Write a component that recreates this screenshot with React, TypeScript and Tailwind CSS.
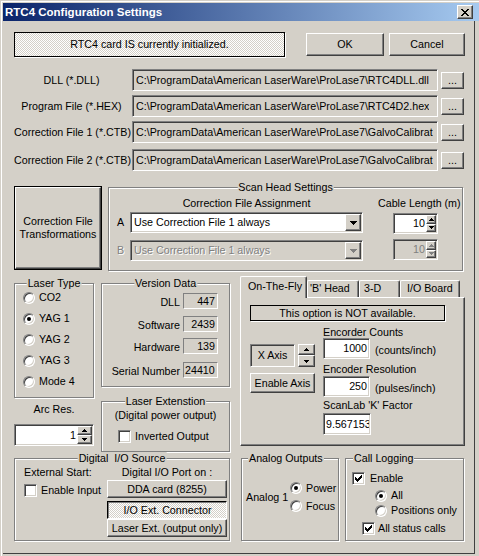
import type { ReactNode } from 'react';

const sunken =
  'border border-t-[#808080] border-l-[#808080] border-b-white border-r-white shadow-[inset_1px_1px_0_#404040,inset_-1px_-1px_0_#d4d0c8]';
const raised =
  'border border-t-white border-l-white border-b-[#404040] border-r-[#404040] shadow-[inset_-1px_-1px_0_#808080]';
const thinSunken = 'border border-t-[#808080] border-l-[#808080] border-b-white border-r-white';
const dither = 'bg-[repeating-conic-gradient(#ffffff_0_25%,#d4d0c8_0_50%)] bg-[length:2px_2px]';

function Btn({ className = '', children }: { className?: string; children?: ReactNode }) {
  return (
    <div className={`${raised} bg-[#d4d0c8] flex items-center justify-center leading-[13px] whitespace-nowrap ${className}`}>
      {children}
    </div>
  );
}

function Group({
  title,
  titleClass = 'left-1/2 -translate-x-1/2',
  className = '',
  children,
}: {
  title: string;
  titleClass?: string;
  className?: string;
  children?: ReactNode;
}) {
  return (
    <div className={`relative border border-[#808080] shadow-[inset_1px_1px_0_#fff,1px_1px_0_#fff] ${className}`}>
      <span className={`absolute -top-[7px] bg-[#d4d0c8] px-[1px] leading-[13px] whitespace-pre ${titleClass}`}>{title}</span>
      {children}
    </div>
  );
}

function Radio({ checked = false }: { checked?: boolean }) {
  return (
    <span className="relative shrink-0 w-[12px] h-[12px] rounded-full bg-white border border-t-[#808080] border-l-[#808080] border-b-white border-r-white shadow-[inset_1px_1px_0_#404040,inset_-1px_-1px_0_#d4d0c8]">
      {checked && <span className="absolute left-[3px] top-[3px] w-[4px] h-[4px] rounded-full bg-black" />}
    </span>
  );
}

function Check({ checked = false }: { checked?: boolean }) {
  return (
    <span className={`shrink-0 w-[13px] h-[13px] bg-white ${sunken} flex items-center justify-center`}>
      {checked && (
        <svg width="7" height="7" viewBox="0 0 7 7" shapeRendering="crispEdges">
          <path
            d="M6 0h1v1h-1z M5 1h2v1h-2z M0 2h1v1h-1z M4 2h3v1h-3z M0 3h2v1h-2z M3 3h3v1h-3z M0 4h5v1h-5z M1 5h3v1h-3z M2 6h1v1h-1z"
            fill="#000"
          />
        </svg>
      )}
    </span>
  );
}

function Tri({ down = false, color = '#000' }: { down?: boolean; color?: string }) {
  return (
    <svg width="5" height="3" viewBox="0 0 5 3" shapeRendering="crispEdges">
      <path d={down ? 'M0 0h5v1H0z M1 1h3v1H1z M2 2h1v1H2z' : 'M2 0h1v1H2z M1 1h3v1H1z M0 2h5v1H0z'} fill={color} />
    </svg>
  );
}

function Spin({
  value,
  className,
  btnW = 'w-[15px]',
  disabled = false,
}: {
  value: string;
  className: string;
  btnW?: string;
  disabled?: boolean;
}) {
  const c = disabled ? '#808080' : '#000';
  return (
    <div className={`${sunken} p-[1px] flex ${disabled ? 'bg-[#d4d0c8] text-[#808080]' : 'bg-white'} ${className}`}>
      <div className="flex-1 flex items-center justify-end pr-[1px]">{value}</div>
      <div className={`flex flex-col ${btnW}`}>
        <div className={`flex-1 ${raised} bg-[#d4d0c8] flex items-center justify-center`}>
          <Tri color={c} />
        </div>
        <div className={`flex-1 ${raised} bg-[#d4d0c8] flex items-center justify-center`}>
          <Tri down color={c} />
        </div>
      </div>
    </div>
  );
}

function Combo({ text, disabled = false }: { text: string; disabled?: boolean }) {
  return (
    <div className={`${sunken} p-[1px] w-[233px] h-[21px] flex ${disabled ? 'bg-[#d4d0c8]' : 'bg-white'}`}>
      <div
        className={`flex-1 flex items-center pl-[2px] whitespace-nowrap ${
          disabled ? 'text-[#808080] [text-shadow:1px_1px_0_#fff]' : ''
        }`}
      >
        {text}
      </div>
      <div className={`w-[16px] ${raised} bg-[#d4d0c8] flex items-center justify-center`}>
        <svg width="7" height="4" viewBox="0 0 7 4" shapeRendering="crispEdges">
          <path d="M0 0h7v1H0z M1 1h5v1H1z M2 2h3v1H2z M3 3h1v1H3z" fill={disabled ? '#808080' : '#000'} />
        </svg>
      </div>
    </div>
  );
}

const files = [
  { label: 'DLL (*.DLL)', path: 'C:\\ProgramData\\American LaserWare\\ProLase7\\RTC4DLL.dll', mt: 'mt-[12px]' },
  { label: 'Program File (*.HEX)', path: 'C:\\ProgramData\\American LaserWare\\ProLase7\\RTC4D2.hex', mt: 'mt-[4px]' },
  { label: 'Correction File 1 (*.CTB)', path: 'C:\\ProgramData\\American LaserWare\\ProLase7\\GalvoCalibrat', mt: 'mt-[4px]' },
  { label: 'Correction File 2 (*.CTB)', path: 'C:\\ProgramData\\American LaserWare\\ProLase7\\GalvoCalibrat', mt: 'mt-[6px]' },
];

const versions = [
  { label: 'DLL', value: '447', mt: 'mt-0' },
  { label: 'Software', value: '2439', mt: 'mt-[7px]' },
  { label: 'Hardware', value: '139', mt: 'mt-[6px]' },
  { label: 'Serial Number', value: '24410', mt: 'mt-[8px]' },
];

export default function App() {
  return (
    <div className="w-[479px] h-[556px] bg-[#d4d0c8] font-['Liberation_Sans',Arial,sans-serif] text-[10.7px] text-black leading-[13px] overflow-hidden pt-[1px] pl-[1px] select-none">
      <div className="h-full border-t border-l border-white pt-[1px] pl-[1px]">
        {/* Title bar */}
        <div className="h-[18px] flex items-center bg-[linear-gradient(to_right,#0a246a,#a6caf0)] pl-[2px]">
          <span className="text-white font-bold text-[11.5px]">RTC4 Configuration Settings</span>
          <div className={`ml-auto mr-[6px] w-[16px] h-[14px] ${raised} bg-[#d4d0c8] flex items-center justify-center`}>
            <svg width="8" height="7" viewBox="0 0 8 7" shapeRendering="crispEdges">
              <path
                d="M0 0h2v1H0z M6 0h2v1H6z M1 1h2v1H1z M5 1h2v1H5z M2 2h4v1H2z M3 3h2v1H3z M2 4h4v1H2z M1 5h2v1H1z M5 5h2v1H5z M0 6h2v1H0z M6 6h2v1H6z"
                fill="#000"
              />
            </svg>
          </div>
        </div>

        {/* Body */}
        <div className="w-[472px] h-[533px] border-r border-b border-[#404040] pl-[11px] pt-[11px] flex flex-col">
          {/* Status + OK / Cancel */}
          <div className="flex items-start">
            <div className={`w-[271px] h-[25px] border border-black shadow-[1px_1px_0_#fff] ${dither} flex items-center justify-center`}>
              RTC4 card IS currently initialized.
            </div>
            <Btn className="ml-[21px] mt-[1px] w-[78px] h-[23px]">OK</Btn>
            <Btn className="ml-[5px] mt-[1px] w-[76px] h-[23px]">Cancel</Btn>
          </div>

          {/* File rows */}
          {files.map((f) => (
            <div key={f.label} className={`flex items-center h-[22px] ${f.mt}`}>
              <div className="w-[115px] text-center whitespace-nowrap">{f.label}</div>
              <div className={`ml-[3px] w-[306px] h-[22px] ${sunken} bg-[#d4d0c8] pl-[3px] pr-[3px] flex items-center`}>
                <div className="overflow-hidden whitespace-nowrap">{f.path}</div>
              </div>
              <Btn className="ml-[3px] w-[23px] h-[17px]">...</Btn>
            </div>
          ))}

          {/* Correction transformations + scan head */}
          <div className="flex items-start mt-[15px]">
            <div className="w-[88px] h-[84px] border border-black">
              <div className={`w-full h-full ${raised} bg-[#d4d0c8] flex flex-col items-center justify-center text-center`}>
                <span>Correction File</span>
                <span>Transformations</span>
              </div>
            </div>
            <Group title="Scan Head Settings" className="ml-[6px] mt-[1px] w-[355px] h-[84px] pt-[9px] pl-[8px] flex">
              <div className="flex flex-col">
                <div className="ml-[13px] w-[233px] text-center">Correction File Assignment</div>
                <div className="mt-[2px] flex items-center">
                  <span className="w-[13px]">A</span>
                  <Combo text="Use Correction File 1 always" />
                </div>
                <div className="mt-[7px] flex items-center">
                  <span className="w-[13px] text-[#808080] [text-shadow:1px_1px_0_#fff]">B</span>
                  <Combo text="Use Correction File 1 always" disabled />
                </div>
              </div>
              <div className="ml-[15px] flex flex-col">
                <div className="whitespace-nowrap">Cable Length (m)</div>
                <Spin value="10" className="mt-[3px] ml-[15px] w-[45px] h-[21px]" btnW="w-[10px]" />
                <Spin value="10" className="mt-[5px] ml-[15px] w-[45px] h-[21px]" btnW="w-[10px]" disabled />
              </div>
            </Group>
          </div>

          {/* Lower area */}
          <div className="flex items-start mt-[5px]">
            {/* Left column */}
            <div className="w-[216px] flex flex-col">
              <div className="flex items-start">
                <div className="w-[80px] mt-[7px] flex flex-col">
                  <Group title="Laser Type" className="h-[115px] pt-[3px] pl-[8px]">
                    {['CO2', 'YAG 1', 'YAG 2', 'YAG 3', 'Mode 4'].map((t) => (
                      <div key={t} className="h-[21px] flex items-center">
                        <Radio checked={t === 'YAG 1'} />
                        <span className="ml-[4px]">{t}</span>
                      </div>
                    ))}
                  </Group>
                  <div className="mt-[5px] text-center">Arc Res.</div>
                  <Spin value="1" className="mt-[8px] w-[80px] h-[22px]" />
                </div>
                <div className="ml-[7px] w-[129px] mt-[7px] flex flex-col">
                  <Group title="Version Data" className="h-[104px] pt-[9px]">
                    {versions.map((v) => (
                      <div key={v.label} className={`flex items-start ${v.mt}`}>
                        <span className="w-[78px] text-right mt-[3px] whitespace-nowrap">{v.label}</span>
                        <div
                          className={`ml-[3px] w-[35px] h-[16px] ${thinSunken} overflow-hidden whitespace-nowrap flex items-center ${
                            v.label === 'Serial Number' ? 'pl-[1px]' : 'justify-end pr-[2px]'
                          }`}
                        >
                          {v.value}
                        </div>
                      </div>
                    ))}
                  </Group>
                  <Group title="Laser Extenstion" className="mt-[14px] h-[51px] pt-[7px]">
                    <div className="text-center">(Digital power output)</div>
                    <div className="mt-[8px] pl-[16px] flex items-center">
                      <Check />
                      <span className="ml-[4px]">Inverted Output</span>
                    </div>
                  </Group>
                </div>
              </div>
              <Group title="Digital  I/O Source" className="mt-[6px] h-[83px] pt-[7px] flex">
                <div className="w-[92px] pl-[9px] flex flex-col">
                  <span className="whitespace-nowrap">External Start:</span>
                  <div className="mt-[5px] flex items-center">
                    <Check />
                    <span className="ml-[4px] whitespace-nowrap">Enable Input</span>
                  </div>
                </div>
                <div className="w-[120px] flex flex-col">
                  <span className="text-center whitespace-nowrap">Digital I/O Port on :</span>
                  <Btn className="mt-[1px] h-[18px]">DDA card (8255)</Btn>
                  <div
                    className={`mt-[3px] h-[18px] border border-t-black border-l-black border-b-white border-r-white shadow-[inset_1px_1px_0_#808080] ${dither} flex items-center justify-center pt-[1px] pl-[1px]`}
                  >
                    I/O Ext. Connector
                  </div>
                  <Btn className="h-[18px]">Laser Ext. (output only)</Btn>
                </div>
              </Group>
            </div>

            {/* Right column */}
            <div className="ml-[10px] w-[225px] flex flex-col">
              <div className="flex items-end h-[21px]">
                <div className="relative z-10 w-[67px] h-[22px] -mb-[1px] border-t border-l border-white border-r border-r-[#404040] rounded-t-[2px] bg-[#d4d0c8] shadow-[inset_-1px_0_0_#808080] pl-[7px] pt-[3px]">
                  On-The-Fly
                </div>
                <div className="w-[52px] h-[17px] border-t border-l border-white border-r border-r-[#404040] rounded-t-[2px] shadow-[inset_-1px_0_0_#808080] pl-[2px] pt-[1px] whitespace-nowrap">
                  'B' Head
                </div>
                <div className="w-[41px] h-[17px] border-t border-l border-white border-r border-r-[#404040] rounded-t-[2px] shadow-[inset_-1px_0_0_#808080] pl-[4px] pt-[1px]">
                  3-D
                </div>
                <div className="w-[60px] h-[17px] border-t border-l border-white border-r border-r-[#404040] rounded-t-[2px] shadow-[inset_-1px_0_0_#808080] pl-[6px] pt-[1px] whitespace-nowrap">
                  I/O Board
                </div>
              </div>
              <div className="w-[225px] h-[149px] border border-t-white border-l-white border-b-[#404040] border-r-[#404040] shadow-[inset_-1px_-1px_0_#808080] pl-[9px] pt-[7px] flex flex-col">
                <div className="w-[195px] h-[16px] border border-black shadow-[1px_1px_0_#fff] flex items-center justify-center">
                  This option is NOT available.
                </div>
                <div className="flex items-start">
                  <div className="w-[65px] mt-[23px] flex flex-col">
                    <div className="flex">
                      <div className={`w-[45px] h-[23px] ${sunken} bg-[#d4d0c8] flex items-center justify-center`}>X Axis</div>
                      <div className="ml-[3px] w-[17px] flex flex-col">
                        <div className={`h-[11px] ${raised} bg-[#d4d0c8] flex items-center justify-center`}>
                          <Tri />
                        </div>
                        <div className={`h-[12px] ${raised} bg-[#d4d0c8] flex items-center justify-center`}>
                          <Tri down />
                        </div>
                      </div>
                    </div>
                    <Btn className="mt-[6px] h-[20px]">Enable Axis</Btn>
                  </div>
                  <div className="ml-[8px] mt-[5px] flex flex-col">
                    <span className="leading-[12px] whitespace-nowrap">Encorder Counts</span>
                    <div className="flex items-center">
                      <div className={`w-[47px] h-[21px] ${sunken} bg-white flex items-center justify-end pr-[2px]`}>1000</div>
                      <span className="ml-[5px] mt-[4px] whitespace-nowrap">(counts/inch)</span>
                    </div>
                    <span className="mt-[4px] leading-[12px] whitespace-nowrap">Encoder Resolution</span>
                    <div className="mt-[1px] flex items-center">
                      <div className={`w-[47px] h-[21px] ${sunken} bg-white flex items-center justify-end pr-[2px]`}>250</div>
                      <span className="ml-[5px] mt-[4px] whitespace-nowrap">(pulses/inch)</span>
                    </div>
                    <span className="mt-[2px] leading-[12px] whitespace-nowrap">ScanLab 'K' Factor</span>
                    <div className={`mt-[2px] w-[48px] h-[22px] ${sunken} bg-white flex items-center pl-[2px] pr-[1px]`}>
                      <div className="overflow-hidden whitespace-nowrap">9.5671534</div>
                    </div>
                  </div>
                </div>
              </div>
              <div className="mt-[12px] flex items-start">
                <Group title="Analog Outputs" titleClass="left-[6px]" className="ml-[1px] w-[98px] h-[83px] pt-[20px] pl-[4px] flex items-start">
                  <div className="w-[44px] h-[36px] flex items-center">Analog 1</div>
                  <div className="flex flex-col">
                    <div className="h-[18px] flex items-center">
                      <Radio checked />
                      <span className="ml-[4px]">Power</span>
                    </div>
                    <div className="h-[18px] flex items-center">
                      <Radio />
                      <span className="ml-[4px]">Focus</span>
                    </div>
                  </div>
                </Group>
                <Group title="Call Logging" titleClass="left-[7px]" className="ml-[6px] w-[119px] h-[83px] pt-[13px] pl-[6px] flex flex-col">
                  <div className="h-[13px] flex items-center">
                    <Check checked />
                    <span className="ml-[5px]">Enable</span>
                  </div>
                  <div className="mt-[3px] ml-[23px] h-[15px] flex items-center">
                    <Radio checked />
                    <span className="ml-[4px]">All</span>
                  </div>
                  <div className="ml-[23px] h-[15px] flex items-center">
                    <Radio />
                    <span className="ml-[4px] whitespace-nowrap">Positions only</span>
                  </div>
                  <div className="mt-[4px] ml-[10px] h-[13px] flex items-center">
                    <Check checked />
                    <span className="ml-[3px] whitespace-nowrap">All status calls</span>
                  </div>
                </Group>
              </div>
            </div>
          </div>
        </div>
      </div>
    </div>
  );
}
